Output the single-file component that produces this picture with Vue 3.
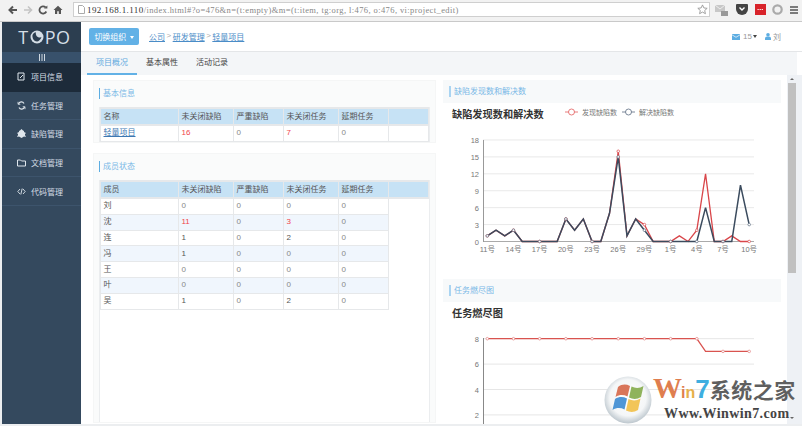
<script setup>
const navItems = [
  { name: "项目信息", icon: "doc", active: true },
  { name: "任务管理", icon: "task" },
  { name: "缺陷管理", icon: "bug" },
  { name: "文档管理", icon: "folder" },
  { name: "代码管理", icon: "code" },
]
const tabs = ["项目概况", "基本属性", "活动记录"]
const columns = ["未关闭缺陷", "严重缺陷", "未关闭任务", "延期任务"]
const members = [
  ["刘", 0, 0, 0, 0],
  ["沈", 11, 0, 3, 0],
  ["连", 1, 0, 2, 0],
  ["冯", 1, 0, 0, 0],
  ["王", 0, 0, 0, 0],
  ["叶", 0, 0, 0, 0],
  ["吴", 1, 0, 2, 0],
]

const found = [1,2,1,2,0,0,0,0,0,4,2,4,0,0,5,16,1,4,3,0,0,0,1,0,2,12,0,0,1,0,0]
const solved = [1,2,1,2,0,0,0,0,0,4,2,4,0,0,5,15,1,4,2,0,0,0,0,0,0,6,0,0,0,10,3]
const burn = [8,8,8,8,8,8,8,8,8,8,8,8,8,8,8,8,8,8,8,8,8,8,8,8,8,7,7,7,7,7,7]

const stepX = 8.73
const xAt = (i) => 44.3 + stepX * i
const y1 = (v) => 138.5 - v * 5.64
const y2 = (v) => 36.7 + (8 - v) * 12.7
const line1 = (arr) => arr.map((v, i) => xAt(i) + "," + y1(v)).join(" ")
const line2 = (arr) => arr.map((v, i) => xAt(i) + "," + y2(v)).join(" ")
const every3 = [0,3,6,9,12,15,18,21,24,27,30]
const dayLabels = ["11号","14号","17号","20号","23号","26号","29号","1号","4号","7号","10号"]
const ticks1 = [0,3,6,9,12,15,18]
const ticks2 = [8,6,4,2]
</script>

<template>
  <div class="page">
    <div class="browser">
      <div class="browser-btns">
        <svg width="10" height="10" viewBox="0 0 10 10"><path d="M9 5H2M5 1.500 1.500 5 5 8.500" fill="none" stroke="#555" stroke-width="2"/></svg>
        <svg width="10" height="10" viewBox="0 0 10 10"><path d="M1 5h7M5 1.500 8.500 5 5 8.500" fill="none" stroke="#c4c4c4" stroke-width="1.600"/></svg>
        <svg width="10" height="10" viewBox="0 0 10 10"><path d="M8.300 6.500A3.600 3.600 0 1 1 7.600 2.400" fill="none" stroke="#555" stroke-width="1.800"/><path d="M6 3.600h3.400V.4z" fill="#555"/></svg>
        <svg width="10" height="10" viewBox="0 0 10 10"><path d="M5 .8 .5 5H2v4h2.200V6.200h1.600V9H8V5h1.500z" fill="#555"/></svg>
      </div>
      <div class="url-box">
        <svg width="7" height="9" viewBox="0 0 7 9"><path d="M.5.5h4l2 2v6h-6z" fill="#fff" stroke="#aaa"/></svg>
        <span class="url-host">192.168.1.110</span><span class="url-rest">/index.html#?o=476&amp;n=(t:empty)&amp;m=(t:item, tg:org, l:476, o:476, vi:project_edit)</span>
        <svg class="url-star" width="11" height="11" viewBox="0 0 12 12"><path d="M6 1l1.500 3.300 3.600.4-2.700 2.400.8 3.500L6 8.800 2.800 10.600l.8-3.500L.9 4.700l3.600-.4z" fill="#fff" stroke="#999"/></svg>
      </div>
      <div class="browser-ext">
        <svg width="14" height="14" viewBox="0 0 14 14"><path d="M0 2h10v7H0z" fill="#c8c8c8"/><path d="M0 2l5 4 5-4" fill="none" stroke="#eee"/><path d="M6 8h7v5H6z" fill="#999"/></svg>
        <svg width="12" height="11" viewBox="0 0 12 11"><path d="M1 0h10a1 1 0 0 1 1 1v4A6 6 0 0 1 0 5V1a1 1 0 0 1 1-1z" fill="#444"/><path d="M3.500 3.500 6 6l2.500-2.500" fill="none" stroke="#fff" stroke-width="1.400"/></svg>
        <svg width="11" height="11" viewBox="0 0 11 11"><rect width="11" height="11" fill="#d8232a"/><path d="M2.500 5.500h6" stroke="#fff" stroke-dasharray="1.200 .9"/></svg>
        <svg width="11" height="11" viewBox="0 0 11 11"><circle cx="5.500" cy="5.500" r="4.200" fill="none" stroke="#aaa" stroke-width="2.200"/></svg>
        <svg width="8" height="8" viewBox="0 0 8 8"><path d="M0 1h8M0 4h8M0 7h8" stroke="#555" stroke-width="1.500"/></svg>
      </div>
    </div>

    <div class="shell">
      <aside class="sidebar">
        <div class="logo">
          <span>T</span>
          <svg width="14" height="14" viewBox="0 0 14 14"><circle cx="7" cy="7" r="6.500" fill="#d5dee6"/><path d="M2.500 5c1-2 2.500-2.800 3.300-2.600C5.500 6 8 8 11.500 7.300 10.500 10 8.500 11.500 7 11.500 4 11.500 2 8 2.500 5z" fill="#2c3e50"/></svg>
          <span>PO</span>
        </div>
        <div class="collapse">
          <svg width="6" height="7" viewBox="0 0 6 7"><path d="M.5 0v7M3 0v7M5.500 0v7" stroke="#cfd8e0"/></svg>
        </div>
        <div v-for="item in navItems" :key="item.name" :class="['nav-item', item.active ? 'active' : '']">
          <svg class="nav-icon" width="9" height="9" viewBox="0 0 9 9">
            <g v-if="item.icon === 'doc'" fill="none" stroke="#dfe6ec"><path d="M1 1h6v7H1z"/><path d="M3 6l3-3" /></g>
            <g v-else-if="item.icon === 'task'" fill="none" stroke="#dfe6ec" stroke-width="1.200"><path d="M1.500 3A3 3 0 0 1 7 2.500M7.500 6A3 3 0 0 1 2 6.500"/><path d="M1 .8v2.500h2.300M8 8.200V5.700H5.700" stroke-width=".8"/></g>
            <path v-else-if="item.icon === 'bug'" d="M4.500 0 6 1.500 7 2v1l2 1-1 1v1l1 2-2-.5L4.500 9 2 7.500 0 8l1-2V5L0 4l2-1V2l1-.5z" fill="#dfe6ec"/>
            <path v-else-if="item.icon === 'folder'" d="M.5 2h3l1 1h4v5H.5z" fill="none" stroke="#dfe6ec"/>
            <path v-else d="M3 2 .8 4.500 3 7M6 2l2.200 2.500L6 7M5.200 1.500 3.800 7.500" fill="none" stroke="#dfe6ec" stroke-width=".9"/>
          </svg>
          <span>{{ item.name }}</span>
        </div>
      </aside>

      <div class="main">
        <header class="topbar">
          <button class="switch-btn">切换组织 <i class="caret"></i></button>
          <nav class="crumbs">
            <a>公司</a><span>&gt;</span><a>研发管理</a><span>&gt;</span><a>轻量项目</a>
          </nav>
          <div class="user-info">
            <svg width="8" height="6" viewBox="0 0 8 6"><rect width="8" height="6" fill="#5dade2"/><path d="M0 .8l4 2.500L8 .8" fill="none" stroke="#fff" stroke-width=".7"/></svg>
            <span class="mail-num">15</span><i class="caret dark"></i>
            <svg class="user-icon" width="6" height="7" viewBox="0 0 6 7"><circle cx="3" cy="1.800" r="1.800" fill="#5dade2"/><path d="M0 7V5.500A2 2 0 0 1 2 3.500h2a2 2 0 0 1 2 2V7z" fill="#5dade2"/></svg>
            <span>刘</span>
          </div>
        </header>

        <div class="tabs">
          <span v-for="(tab, i) in tabs" :key="tab" :class="['tab', i === 0 ? 'on' : '']">{{ tab }}</span>
        </div>

        <div class="work">
          <div class="content">
            <div class="col-left">
              <section class="panel">
                <h4 class="panel-title">基本信息</h4>
                <div class="table-frame">
                  <table>
                    <colgroup><col class="c0"><col class="c1"><col class="c2"><col class="c3"><col class="c4"><col></colgroup>
                    <thead><tr><th>名称</th><th v-for="c in columns" :key="c">{{ c }}</th><th></th></tr></thead>
                    <tbody>
                      <tr>
                        <td><a class="link">轻量项目</a></td>
                        <td class="red">16</td><td>0</td><td class="red">7</td><td>0</td><td></td>
                      </tr>
                    </tbody>
                  </table>
                </div>
              </section>
              <section class="panel grow">
                <h4 class="panel-title">成员状态</h4>
                <div class="table-frame fill">
                  <table>
                    <colgroup><col class="c0"><col class="c1"><col class="c2"><col class="c3"><col class="c4"><col></colgroup>
                    <thead><tr><th>成员</th><th v-for="c in columns" :key="c">{{ c }}</th><th></th></tr></thead>
                    <tbody>
                      <tr v-for="(m, r) in members" :key="m[0]" :class="r % 2 ? 'odd' : ''">
                        <td class="name">{{ m[0] }}</td>
                        <td :class="m[1] > 10 ? 'red' : m[1] ? 'dark' : ''">{{ m[1] }}</td>
                        <td>{{ m[2] }}</td>
                        <td :class="m[3] === 3 ? 'red' : m[3] ? 'dark' : ''">{{ m[3] }}</td>
                        <td>{{ m[4] }}</td>
                        <td class="blank"></td>
                      </tr>
                    </tbody>
                  </table>
                </div>
              </section>
            </div>

            <div class="col-right">
              <section class="card first">
                <div class="card-head"><span>缺陷发现数和解决数</span></div>
                <svg class="chart" width="338" height="174" viewBox="0 0 338 174">
                  <text x="9" y="15" class="chart-title">缺陷发现数和解决数</text>
                  <g class="legend">
                    <path d="M122 9h13" stroke="#e25a5a"/><circle cx="128.500" cy="9" r="3" fill="#fff" stroke="#e25a5a"/>
                    <text x="139" y="11.500">发现缺陷数</text>
                    <path d="M179 9h13" stroke="#5a6b80"/><circle cx="185.500" cy="9" r="3" fill="#fff" stroke="#5a6b80"/>
                    <text x="196" y="11.500">解决缺陷数</text>
                  </g>
                  <g v-for="t in ticks1" :key="t">
                    <path :d="'M40 ' + y1(t) + 'H311'" :stroke="t ? '#e9e9e9' : '#aaa'" />
                    <text x="36" :y="y1(t) + 3" class="axis" text-anchor="end">{{ t }}</text>
                  </g>
                  <path d="M40.500 37V139" stroke="#999"/>
                  <text v-for="(d, i) in dayLabels" :key="d" :x="xAt(every3[i])" y="149" class="axis" text-anchor="middle">{{ d }}</text>
                  <polyline :points="line1(found)" fill="none" stroke="#d9464a" stroke-width="1.300"/>
                  <polyline :points="line1(solved)" fill="none" stroke="#3b4b5e" stroke-width="1.500"/>
                  <circle v-for="i in every3" :key="'f' + i" :cx="xAt(i)" :cy="y1(found[i])" r="1.300" fill="#fff" stroke="#d9464a" stroke-width=".7"/>
                  <circle v-for="i in every3" :key="'s' + i" :cx="xAt(i)" :cy="y1(solved[i])" r="1.300" fill="#fff" stroke="#5a6b80" stroke-width=".7"/>
                </svg>
              </section>
              <section class="card">
                <div class="card-head"><span>任务燃尽图</span></div>
                <svg class="chart" width="338" height="130" viewBox="0 0 338 130">
                  <text x="9" y="14.500" class="chart-title">任务燃尽图</text>
                  <g v-for="t in ticks2" :key="t">
                    <path :d="'M40 ' + y2(t) + 'H311'" stroke="#e6e6e6"/>
                    <text x="36" :y="y2(t) + 3" class="axis" text-anchor="end">{{ t }}</text>
                  </g>
                  <path d="M40.500 36V130" stroke="#888"/>
                  <polyline :points="line2(burn)" fill="none" stroke="#d9534f" stroke-width="1.300"/>
                  <circle v-for="i in every3" :key="i" :cx="xAt(i)" :cy="y2(burn[i])" r="1.300" fill="#fff" stroke="#e08080" stroke-width=".7"/>
                </svg>
              </section>
            </div>
          </div>

          <div class="scrollbar">
            <i class="arrow up"></i>
            <div class="thumb"></div>
            <i class="arrow down"></i>
          </div>
        </div>
      </div>
    </div>

    <div class="watermark">
      <svg width="48" height="48" viewBox="0 0 48 48">
        <defs>
          <radialGradient id="orb" cx="50%" cy="45%" r="55%">
            <stop offset="0%" stop-color="#ffffff"/>
            <stop offset="70%" stop-color="#f4f6f7"/>
            <stop offset="100%" stop-color="#bcc6cd"/>
          </radialGradient>
        </defs>
        <circle cx="24" cy="24" r="23.500" fill="url(#orb)"/>
        <path d="M14 11c4-3 8-3 12-1l-2.500 10.500c-4-2-8-2-12 .5z" fill="#d9765a"/>
        <path d="M27.500 10.500c4 2 8 2 12-.5l-2.500 11c-4 2.500-8 2.500-12 .5z" fill="#8fb35c"/>
        <path d="M11 23c4-2.500 8-2.500 12-.5l-2.500 11c-4-2-8-2-12 .5z" fill="#4f96d6"/>
        <path d="M24.500 23c4 2 8 2 12-.5L34 34c-4 2.500-8 2.500-12 .5z" fill="#f2c558"/>
      </svg>
      <div class="wm-text">
        <div class="wm-line1"><b class="wm-w">W</b><b class="wm-i">i</b><b class="wm-n">n</b><b class="wm-7">7</b><b class="wm-cn">系统之家</b></div>
        <div class="wm-line2">Www.Winwin7.com</div>
      </div>
    </div>
  </div>
</template>

<style scoped>
.page {
  position: relative;
  width: 802px;
  height: 426px;
  overflow: hidden;
  display: flex;
  flex-direction: column;
  background: #fff;
  font-family: "Liberation Sans", "Noto Sans CJK SC", sans-serif;
  font-size: 8px;
  color: #555;
}
.browser {
  height: 22px;
  flex: none;
  display: flex;
  align-items: center;
  background: #f2f2f2;
  border-bottom: 1px solid #c9c9c9;
  box-sizing: border-box;
  padding: 0 4px 2px 8px;
}
.browser-btns {
  display: flex;
  gap: 5px;
  width: 65px;
}
.url-box {
  width: 637px;
  height: 15px;
  box-sizing: border-box;
  display: flex;
  align-items: center;
  padding-left: 4px;
  background: #fff;
  border: 1px solid #cfcfcf;
  white-space: nowrap;
  overflow: hidden;
  font-family: "Liberation Serif", "Noto Sans CJK SC", serif;
}
.url-box > svg:first-child {
  margin-right: 2px;
}
.url-host {
  font-size: 9px;
  letter-spacing: 0.4px;
  color: #333;
}
.url-rest {
  font-size: 8.500px;
  letter-spacing: 0.4px;
  color: #888;
}
.url-star {
  margin-left: auto;
  margin-right: 1px;
}
.browser-ext {
  flex: 1;
  display: flex;
  align-items: center;
  justify-content: space-between;
  padding-left: 5px;
}

.shell {
  flex: 1;
  display: flex;
  min-height: 0;
  padding: 0 0 2px 2px;
  background: #eceef0;
}
.sidebar {
  width: 79px;
  flex: none;
  background: #34495e;
  color: #d5dde5;
}
.logo {
  height: 30px;
  box-sizing: border-box;
  display: flex;
  align-items: center;
  justify-content: center;
  gap: 1px;
  padding-left: 6px;
  background: #2c3e50;
  color: #d5dee6;
  font-size: 18px;
  letter-spacing: 0.500px;
  font-family: "Open Sans", "Liberation Sans", sans-serif;
}
.collapse {
  height: 11px;
  display: flex;
  align-items: center;
  justify-content: center;
  background: #38516b;
}
.nav-item {
  height: 28.600px;
  box-sizing: border-box;
  display: flex;
  align-items: center;
  gap: 5px;
  padding-left: 15px;
  border-bottom: 1px solid #3d546c;
  font-size: 8px;
}
.nav-item.active {
  background: #1d2b3a;
  border-bottom-color: #1d2b3a;
}
.nav-icon {
  flex: none;
}

.main {
  flex: 1;
  min-width: 0;
  display: flex;
  flex-direction: column;
  background: #fff;
}
.topbar {
  height: 30px;
  flex: none;
  box-sizing: border-box;
  display: flex;
  align-items: center;
  padding: 0 21px 0 8px;
  border-bottom: 1px solid #e4e6e8;
}
.switch-btn {
  width: 50px;
  height: 17px;
  padding: 0;
  border: none;
  border-radius: 2px;
  background: #62b1e6;
  color: #fff;
  font: inherit;
}
.caret {
  display: inline-block;
  border-left: 2.500px solid transparent;
  border-right: 2.500px solid transparent;
  border-top: 3px solid #fff;
  vertical-align: middle;
  margin-left: 1px;
}
.caret.dark {
  border-top-color: #444;
}
.crumbs {
  margin-left: 10px;
  display: flex;
  gap: 1.500px;
  color: #aaa;
}
.crumbs a {
  color: #4a8cc7;
  text-decoration: underline;
}
.user-info {
  margin-left: auto;
  display: flex;
  align-items: center;
  color: #999;
}
.mail-num {
  margin-left: 3px;
}
.user-icon {
  margin: 0 2px 0 8px;
}

.tabs {
  height: 23px;
  flex: none;
  box-sizing: border-box;
  display: flex;
  padding-left: 6px;
  background: #f4f6f8;
  margin-right: 5px;
}
.tab {
  width: 50px;
  text-align: center;
  line-height: 21px;
  color: #444;
}
.tab.on {
  color: #62a9de;
  border-bottom: 2px solid #62b1e6;
}

.work {
  flex: 1;
  min-height: 0;
  display: flex;
  background: #eef1f5;
}
.content {
  flex: 1;
  min-width: 0;
  display: flex;
  gap: 7px;
  padding: 5px 6px 0 12px;
  background: #fff;
}
.col-left {
  width: 343px;
  flex: none;
  display: flex;
  flex-direction: column;
  gap: 10px;
  padding-bottom: 1px;
  box-sizing: border-box;
}
.panel {
  background: #fafbfb;
  padding: 0 5px 4px 5px;
  border: 1px solid #f5f6f6;
  box-sizing: border-box;
  height: 63px;
  flex: none;
}
.panel.grow {
  flex: 1;
  height: auto;
  display: flex;
  flex-direction: column;
  padding-bottom: 0;
}
.panel-title {
  margin: 7px 0 8px;
  height: 11px;
  line-height: 11px;
  border-left: 1px solid #5dade2;
  padding-left: 3px;
  font-size: 8px;
  font-weight: normal;
  color: #79b8e6;
}
.table-frame {
  background: #fff;
  border-left: 1px solid #ebedef;
  border-right: 1px solid #ebedef;
}
.table-frame.fill {
  flex: 1;
}
table {
  width: 100%;
  table-layout: fixed;
  border-collapse: collapse;
}
.c0 { width: 78px; }
.c1 { width: 55px; }
.c2 { width: 50px; }
.c3 { width: 55px; }
.c4 { width: 50px; }
th, td {
  padding: 0 0 0 2.500px;
  border: 1px solid #e6e8ea;
  text-align: left;
  font-weight: normal;
  line-height: 10px;
}
th {
  height: 15px;
  background: #c6e2f5;
  color: #555;
  border-top: 2px solid #e6e8ea;
  border-bottom: 2px solid #e6e8ea;
}
td {
  height: 14.800px;
  color: #888;
  background: #fff;
}
tr.odd td {
  background: #f0f6fd;
}
td.name, td.dark {
  color: #555;
}
td.red {
  color: #f0444c;
}
td.blank, tr.odd td.blank {
  background: #fff;
  border: none;
}
.link {
  color: #3d78b3;
  text-decoration: underline;
}
.col-right {
  width: 338px;
  flex: none;
  overflow: hidden;
  display: flex;
  flex-direction: column;
  gap: 2px;
}
.card {
  flex: none;
  height: 144px;
  background: #fff;
}
.card.first {
  height: 197px;
}
.card-head {
  height: 23px;
  display: flex;
  align-items: center;
  padding-left: 6px;
  background: #f7f9fa;
  color: #79b8e6;
}
.card-head span {
  border-left: 2px solid #a9d4f2;
  padding-left: 3px;
  line-height: 11px;
}
.chart {
  display: block;
}
.chart-title {
  font-size: 10.200px;
  font-weight: bold;
  fill: #333;
}
.legend {
  stroke-width: 0.800;
}
.legend text {
  font-size: 7px;
  stroke: none;
  fill: #777;
}
.axis {
  font-size: 7.500px;
  fill: #777;
}
.scrollbar {
  width: 10px;
  flex: none;
  margin-right: 5px;
  padding-top: 3px;
  display: flex;
  flex-direction: column;
  align-items: center;
  gap: 3px;
}
.thumb {
  width: 8px;
  height: 190px;
  background: #c0c0c0;
}
.arrow {
  width: 0;
  height: 0;
  border-left: 2px solid transparent;
  border-right: 2px solid transparent;
}
.arrow.up {
  border-bottom: 2px solid #666;
}
.arrow.down {
  margin-top: auto;
  margin-bottom: 5px;
  border-top: 2px solid #666;
}

.watermark {
  position: absolute;
  left: 604px;
  top: 376px;
  display: flex;
}
.wm-text {
  width: 146px;
}
.wm-line1 {
  display: flex;
  align-items: baseline;
  height: 25px;
  line-height: 25px;
  padding-left: 1px;
}
.wm-w {
  color: #df7e4f;
  font-family: "Liberation Serif", serif;
  font-size: 29px;
}
.wm-i {
  color: #df7e4f;
  font-size: 16px;
  margin-left: -1px;
}
.wm-n {
  color: #e6b04a;
  font-size: 16px;
}
.wm-7 {
  color: #3eaee0;
  font-size: 26px;
}
.wm-cn {
  color: #5f5f5f;
  font-size: 21px;
  letter-spacing: 0.500px;
}
.wm-line2 {
  font-family: "Liberation Serif", serif;
  font-weight: bold;
  font-size: 14px;
  line-height: 18px;
  margin-top: 4px;
  padding-left: 12px;
  color: #444;
  letter-spacing: 0.400px;
}
</style>
